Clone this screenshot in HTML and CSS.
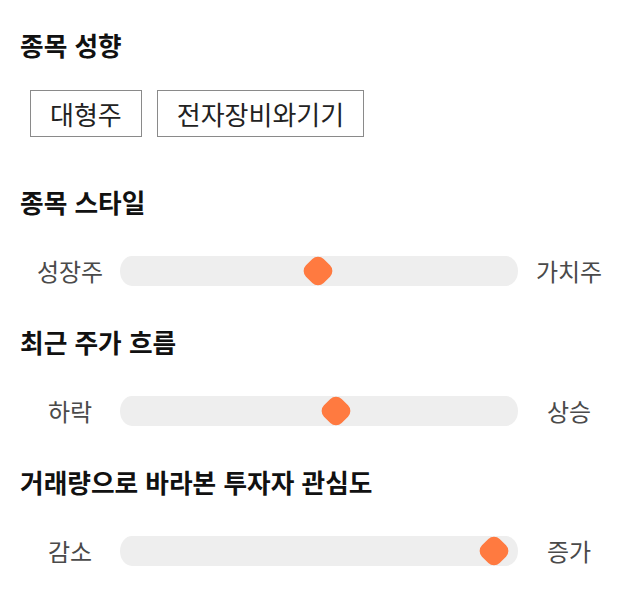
FILE: index.html
```html
<!DOCTYPE html>
<html lang="ko">
<head>
<meta charset="utf-8">
<title>종목 정보</title>
<link rel="stylesheet" href="styles.css">
</head>
<body>
<main class="panel">
  <section class="section section-tags">
    <h2 class="title">종목 성향</h2>
    <div class="tags">
      <span class="tag">대형주</span>
      <span class="tag">전자장비와기기</span>
    </div>
  </section>

  <section class="section">
    <h2 class="title">종목 스타일</h2>
    <div class="scale">
      <span class="label">성장주</span>
      <div class="track"><span class="thumb" style="left: 49.7%"></span></div>
      <span class="label">가치주</span>
    </div>
  </section>

  <section class="section">
    <h2 class="title">최근 주가 흐름</h2>
    <div class="scale">
      <span class="label">하락</span>
      <div class="track"><span class="thumb" style="left: 54.3%"></span></div>
      <span class="label">상승</span>
    </div>
  </section>

  <section class="section">
    <h2 class="title">거래량으로 바라본 투자자 관심도</h2>
    <div class="scale">
      <span class="label">감소</span>
      <div class="track"><span class="thumb" style="left: 94%"></span></div>
      <span class="label">증가</span>
    </div>
  </section>
</main>
</body>
</html>
```

FILE: styles.css
```css
* {
  box-sizing: border-box;
}

html, body {
  margin: 0;
  padding: 0;
  background: #ffffff;
}

body {
  font-family: "Noto Sans CJK KR", "Noto Sans", sans-serif;
  color: #111111;
}

.panel {
  width: 640px;
  padding: 27px 20px 20px;
  display: flex;
  flex-direction: column;
}

.section {
  display: flex;
  flex-direction: column;
}

.section + .section {
  margin-top: 38px;
}

.section-tags {
  padding-bottom: 9px;
}

.title {
  margin: 0 0 36px 0;
  font-size: 25.7px;
  font-weight: 700;
  line-height: 36px;
  color: #111111;
}

.section-tags .title {
  margin-bottom: 27px;
}

.tags {
  display: flex;
  gap: 15px;
  padding-left: 10px;
}

.tag {
  display: inline-block;
  border: 1px solid #8a8a8a;
  padding: 0 19px;
  font-size: 26px;
  line-height: 45px;
  color: #222222;
}

.scale {
  display: grid;
  grid-template-columns: 100px 398px 1fr;
  align-items: center;
  height: 30px;
}

.label {
  text-align: center;
  font-size: 24px;
  line-height: 30px;
  color: #4a4a4a;
}

.track {
  position: relative;
  height: 30px;
  background: #eeeeee;
  border-radius: 12px / 15px;
}

.thumb {
  position: absolute;
  top: 50%;
  width: 25px;
  height: 25px;
  background: #ff7a40;
  border-radius: 8px;
  transform: translate(-50%, -50%) rotate(45deg);
}
```
